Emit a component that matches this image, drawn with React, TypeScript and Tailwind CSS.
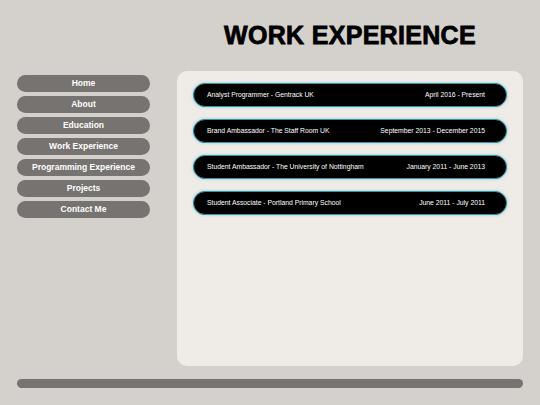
import React from "react";

const nav = ["Home", "About", "Education", "Work Experience", "Programming Experience", "Projects", "Contact Me"];
const jobs = [
  ["Analyst Programmer - Gentrack UK", "April 2016 - Present"],
  ["Brand Ambassador - The Staff Room UK", "September 2013 - December 2015"],
  ["Student Ambassador - The University of Nottingham", "January 2011 - June 2013"],
  ["Student Associate - Portland Primary School", "June 2011 - July 2011"],
];

export default function App() {
  return (
    <div className="w-[540px] h-[405px] bg-[#d4d1cc] overflow-hidden flex flex-col" style={{ fontFamily: '"Liberation Sans", Arial, sans-serif' }}>
      <div className="flex pl-[177px] pr-[17px] pt-[19px] h-[71px]">
        <h1 className="flex-1 text-center text-[25px] leading-[32px] text-black font-bold [-webkit-text-stroke:0.8px_black] tracking-[0.3px]">
          WORK EXPERIENCE
        </h1>
      </div>
      <div className="flex pl-[17px] pr-[17px] gap-[27px]">
        <div className="flex flex-col gap-[4px] w-[133px] pt-[4px]">
          {nav.map((n) => (
            <div key={n} className="h-[17px] rounded-full bg-[#767371] text-white font-bold text-[8.5px] flex items-center justify-center">
              {n}
            </div>
          ))}
        </div>
        <div className="flex-1 h-[295px] bg-[#efebe6] rounded-[10px] pt-[12px] px-[16px] flex flex-col gap-[12px]">
          {jobs.map(([a, b]) => (
            <div key={a} className="h-[24px] rounded-full bg-black border border-[#3a8ea0] shadow-[0_0_3px_#7ccbdc] flex items-center justify-between pl-[13px] pr-[21px] text-white text-[6.8px]">
              <span>{a}</span>
              <span>{b}</span>
            </div>
          ))}
        </div>
      </div>
      <div className="mx-[17px] mt-[13px] h-[9px] rounded-full bg-[#767371]" />
    </div>
  );
}
